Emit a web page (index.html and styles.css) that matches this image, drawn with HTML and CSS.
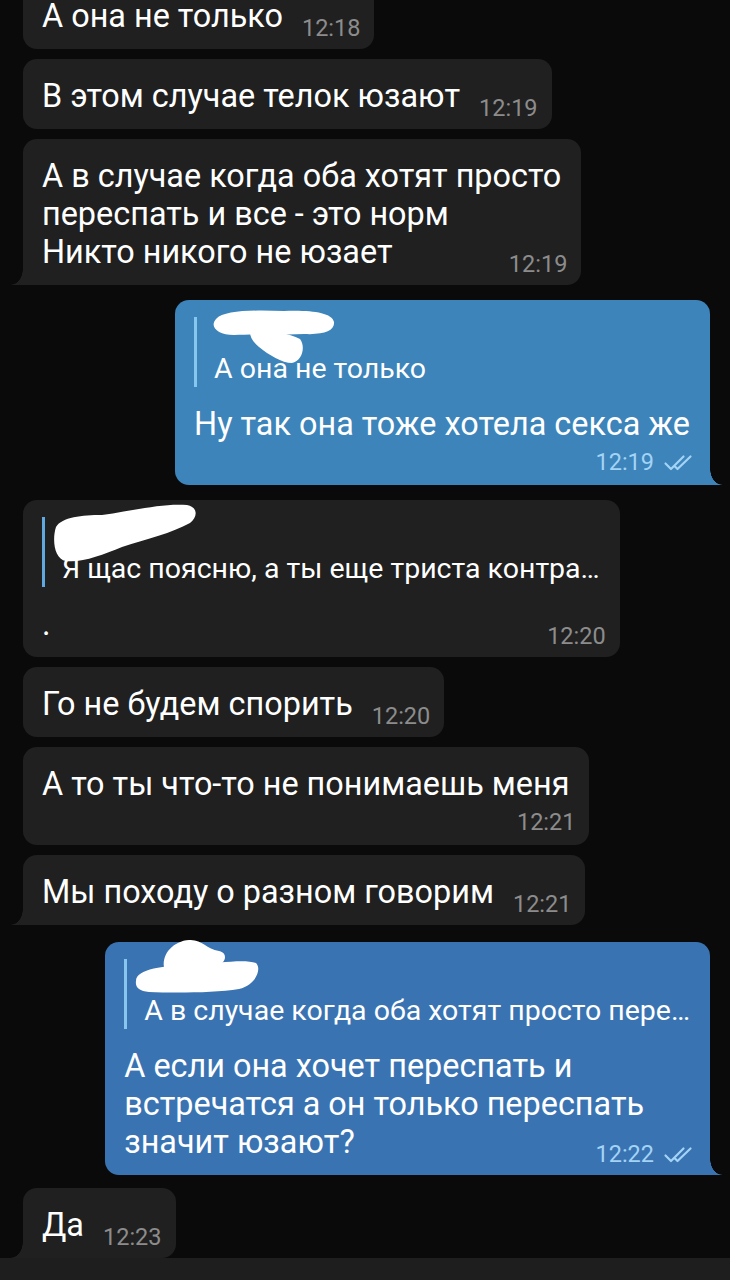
FILE: index.html
```html
<!DOCTYPE html>
<html lang="ru">
<head>
  <meta charset="UTF-8">
  <meta name="viewport" content="width=device-width, initial-scale=1.0">
  <title>Чат</title>
  <link rel="stylesheet" href="styles.css">
</head>
<body>
  <!-- лента сообщений, прижата к низу -->
  <div class="chat">
    <div class="msg in">
      <div class="bubble">А она не только<span class="time">12:18</span></div>
    </div>
    <div class="msg in">
      <div class="bubble">В этом случае телок юзают<span class="time">12:19</span></div>
    </div>
    <div class="msg in">
      <div class="bubble tail">А в случае когда оба хотят просто<br>переспать и все - это норм<br>Никто никого не юзает<span class="time">12:19</span></div>
    </div>

    <div class="msg out group">
      <div class="bubble tail has-reply">
        <div class="reply">
          <div class="reply-name">
            <svg class="scribble" width="130" height="34" viewBox="0 0 130 34">
              <path d="M2 2 C10 -7 40 -7 70 -6 C95 -7 118 -5 120 5 C121 14 110 18 90 17 C70 18 40 17 20 18 C4 18 -5 10 2 2 Z"/>
              <path d="M38 12 C55 13 75 16 86 22 C92 30 88 44 78 46 C68 46 55 38 45 30 C36 23 34 14 38 12 Z"/>
            </svg>
          </div>
          <div class="reply-text">А она не только</div>
        </div>
        Ну так она тоже хотела секса же
        <span class="time own">12:19<svg class="checks" viewBox="0 0 32 18"><path d="M2 9.5 L7.5 15 L20 2.5 M11 12 L14 15 L27 2.5"/></svg></span>
      </div>
    </div>

    <div class="msg in group">
      <div class="bubble has-reply">
        <div class="reply">
          <div class="reply-name">
            <svg class="scribble" width="130" height="34" viewBox="0 0 130 34">
              <path d="M-6 10 C0 0 20 -2 40 -2 C70 -6 100 -14 125 -12 C136 -10 136 0 128 6 C110 16 85 22 60 30 C40 38 20 46 4 44 C-8 42 -10 22 -6 10 Z"/>
            </svg>
          </div>
          <div class="reply-text">Я щас поясню, а ты еще триста контра…</div>
        </div>
        .<span class="time">12:20</span>
      </div>
    </div>
    <div class="msg in">
      <div class="bubble">Го не будем спорить<span class="time">12:20</span></div>
    </div>
    <div class="msg in">
      <div class="bubble">А то ты что-то не понимаешь меня<span class="time own">12:21</span></div>
    </div>
    <div class="msg in">
      <div class="bubble tail">Мы походу о разном говорим<span class="time">12:21</span></div>
    </div>

    <div class="msg out group loose">
      <div class="bubble tail has-reply deep">
        <div class="reply">
          <div class="reply-name">
            <svg class="scribble" width="130" height="34" viewBox="0 0 130 34">
              <path d="M-8 22 C-8 10 20 6 50 6 C75 4 100 0 112 4 C118 10 112 26 95 30 C70 34 30 34 5 33 C-5 32 -9 28 -8 22 Z"/>
              <path d="M20 8 C18 -6 30 -18 45 -19 C58 -20 62 -10 75 -8 C85 -6 82 6 70 8 Z"/>
            </svg>
          </div>
          <div class="reply-text">А в случае когда оба хотят просто пере…</div>
        </div>
        А если она хочет переспать и<br>встречатся а он только переспать<br>значит юзают?<span class="time">12:22<svg class="checks" viewBox="0 0 32 18"><path d="M2 9.5 L7.5 15 L20 2.5 M11 12 L14 15 L27 2.5"/></svg></span>
      </div>
    </div>

    <div class="msg in group tight">
      <div class="bubble tail">Да<span class="time">12:23</span></div>
    </div>
  </div>

  <!-- нижняя панель -->
  <div class="bottom-bar"></div>
</body>
</html>
```

FILE: styles.css
```css
* {
  box-sizing: border-box;
}
body {
  margin: 0;
  height: 1280px;
  background-color: #0a0a0a;
  font-family: Roboto, "Noto Sans", sans-serif;
  display: flex;
  flex-direction: column;
  overflow: hidden;
}
/* лента */
.chat {
  flex: 1;
  min-height: 0;
  display: flex;
  flex-direction: column;
  justify-content: flex-end;
  overflow: hidden;
}
.msg {
  display: flex;
  flex-shrink: 0;
  margin-top: 10px;
}
.msg.group {
  margin-top: 15px;
}
.msg.group.loose {
  margin-top: 17px;
}
.msg.group.tight {
  margin-top: 13px;
}
.msg.in {
  padding-left: 23px;
}
.msg.out {
  justify-content: flex-end;
  padding-right: 20px;
}
/* пузырь */
.bubble {
  --bg: #202020;
  position: relative;
  display: flow-root;
  background-color: var(--bg);
  color: #fff;
  border-radius: 14px;
  padding: 18px 20px 14px 19px;
  font-size: 32.4px;
  line-height: 38px;
}
.out .bubble {
  --bg: #3c84ba;
}
.out .bubble.deep {
  --bg: #3a73b2;
}
.bubble.has-reply {
  padding-top: 17px;
}
/* хвостик */
.bubble.tail::after {
  content: "";
  position: absolute;
  bottom: 0;
  width: 12px;
  height: 16px;
}
.in .bubble.tail {
  border-bottom-left-radius: 0;
}
.in .bubble.tail::after {
  left: -12px;
  background: radial-gradient(ellipse 12px 16px at 0 0, transparent 96%, var(--bg) 100%);
}
.out .bubble.tail {
  border-bottom-right-radius: 0;
}
.out .bubble.tail::after {
  right: -12px;
  background: radial-gradient(ellipse 12px 16px at 100% 0, transparent 96%, var(--bg) 100%);
}
/* время */
.time {
  float: right;
  margin: 20px -6px -4px 19px;
  font-size: 23.5px;
  line-height: 22px;
  color: #8c8c8c;
}
.out .time {
  color: #a3d3f5;
}
.time.own {
  float: none;
  display: block;
  text-align: right;
  margin: 8px -6px -2px 0;
}
.checks {
  width: 33px;
  height: 18px;
  margin-left: 9px;
  vertical-align: -2px;
  fill: none;
  stroke: #a3d3f5;
  stroke-width: 2.2;
  stroke-linecap: round;
  stroke-linejoin: round;
}
/* цитата */
.reply {
  border-left: 3px solid #5fa9de;
  padding-left: 17px;
  margin-bottom: 18px;
}
.out .reply {
  border-color: #86c6ef;
}
.reply-name {
  height: 34px;
}
.scribble {
  display: block;
  position: relative;
  z-index: 1;
  overflow: visible;
  fill: #fff;
}
.reply-text {
  font-size: 28.5px;
  line-height: 36px;
  white-space: nowrap;
}
.bottom-bar {
  height: 22px;
  flex-shrink: 0;
  background-color: #1e1e1e;
}
```
